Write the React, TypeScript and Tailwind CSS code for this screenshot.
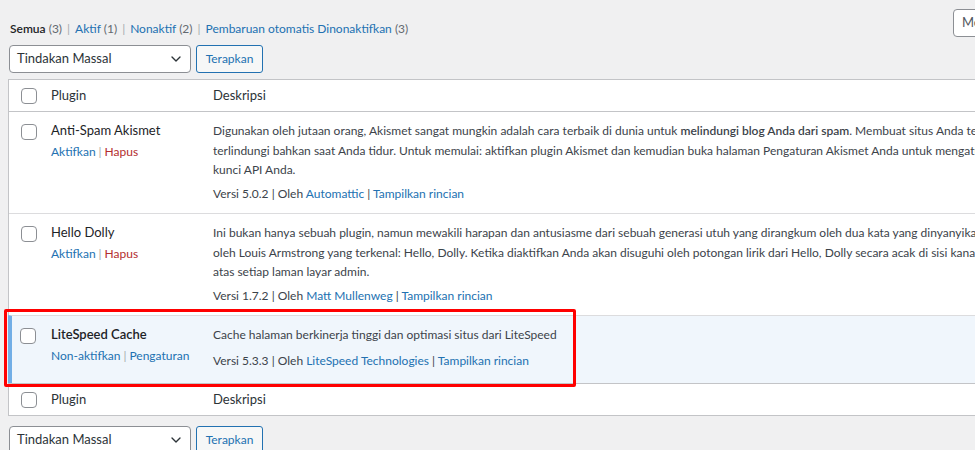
import React from "react";
import { ChevronDown } from "lucide-react";

const Sep = () => <span className="text-[#a7aaad] mx-[5px]">|</span>;

function Checkbox() {
  return <div className="w-4 h-4 border border-[#8c8f94] rounded-[4px] bg-white" />;
}

function BulkActions() {
  return (
    <div className="flex gap-[5px]">
      <div className="w-[182px] h-[28px] border border-[#8c8f94] rounded-[4px] bg-white pl-[7px] pr-[6px] flex items-center justify-between text-[13px] text-[#2c3338]">
        <span>Tindakan Massal</span>
        <ChevronDown size={16} strokeWidth={2} className="text-[#2c3338]" />
      </div>
      <div className="w-[67px] h-[28px] border border-[#2271b1] rounded-[3px] bg-[#f6f7f7] text-[#2271b1] flex items-center justify-center text-[12px]">
        Terapkan
      </div>
    </div>
  );
}

function HeaderRow({ bottom }: { bottom?: boolean }) {
  return (
    <div
      className={
        "flex items-center h-[32px] text-[13px] text-[#2c3338] " +
        (bottom ? "border-t border-[#c3c4c7]" : "border-b border-[#c3c4c7]")
      }
    >
      <div className="w-[42px] pl-[12px] flex">
        <Checkbox />
      </div>
      <div className="w-[162px]">Plugin</div>
      <div className="flex-1">Deskripsi</div>
    </div>
  );
}

export default function App() {
  return (
    <div className="relative h-[450px] w-[975px] overflow-hidden bg-[#f0f0f1] text-[12px] text-[#3c434a] font-['Segoe_UI',Lato,'Noto_Sans',sans-serif]">
      <div className="w-[1160px] pl-[8px]">
        <div className="flex">
          <div className="flex-1">
            <div className="pt-[20px] pl-[2px] leading-[18px] text-[#646970]">
              <span className="font-semibold text-[#1d2327]">Semua</span> (3)
              <Sep />
              <span className="text-[#2271b1]">Aktif</span> (1)
              <Sep />
              <span className="text-[#2271b1]">Nonaktif</span> (2)
              <Sep />
              <span className="text-[#2271b1]">Pembaruan otomatis Dinonaktifkan</span> (3)
            </div>
            <div className="mt-[7px] pl-[1px]">
              <BulkActions />
            </div>
          </div>
          <div className="mt-[9px] w-[207px] h-[28px] border border-[#8c8f94] rounded-[4px] bg-white pl-[8px] flex items-center text-[13px] text-[#50575e] whitespace-nowrap overflow-hidden">
            Mencari plugin yang terpasang...
          </div>
        </div>

        <div className="mt-[6px] border border-[#c3c4c7] bg-white">
          <HeaderRow />

          {/* Akismet */}
          <div className="flex">
            <div className="w-[42px] pl-[12px] pt-[12px]">
              <Checkbox />
            </div>
            <div className="w-[162px] pt-[9px]">
              <div className="text-[13px] leading-[19px] text-[#1d2327]">Anti-Spam Akismet</div>
              <div className="pt-[3px] leading-[18px]">
                <span className="text-[#2271b1]">Aktifkan</span>
                <span className="text-[#a7aaad] mx-[3px]">|</span>
                <span className="text-[#b32d2e]">Hapus</span>
              </div>
            </div>
            <div className="flex-1 pt-[9px] pb-[10px] leading-[19.5px] whitespace-nowrap">
              <div>
                Digunakan oleh jutaan orang, Akismet sangat mungkin adalah cara terbaik di dunia untuk{" "}
                <span className="font-semibold">melindungi blog Anda dari spam</span>. Membuat situs Anda tetap
              </div>
              <div>
                terlindungi bahkan saat Anda tidur. Untuk memulai: aktifkan plugin Akismet dan kemudian buka halaman Pengaturan Akismet Anda untuk mengatur
              </div>
              <div>kunci API Anda.</div>
              <div className="mt-[4px]">
                Versi 5.0.2 <span>|</span> Oleh <span className="text-[#2271b1]">Automattic</span> <span>|</span>{" "}
                <span className="text-[#2271b1]">Tampilkan rincian</span>
              </div>
            </div>
          </div>

          {/* Hello Dolly */}
          <div className="flex border-t border-[#dcdcde]">
            <div className="w-[42px] pl-[12px] pt-[12px]">
              <Checkbox />
            </div>
            <div className="w-[162px] pt-[9px]">
              <div className="text-[13px] leading-[19px] text-[#1d2327]">Hello Dolly</div>
              <div className="pt-[3px] leading-[18px]">
                <span className="text-[#2271b1]">Aktifkan</span>
                <span className="text-[#a7aaad] mx-[3px]">|</span>
                <span className="text-[#b32d2e]">Hapus</span>
              </div>
            </div>
            <div className="flex-1 pt-[9px] pb-[10px] leading-[19.5px] whitespace-nowrap">
              <div>
                Ini bukan hanya sebuah plugin, namun mewakili harapan dan antusiasme dari sebuah generasi utuh yang dirangkum oleh dua kata yang dinyanyikan
              </div>
              <div>
                oleh Louis Armstrong yang terkenal: Hello, Dolly. Ketika diaktifkan Anda akan disuguhi oleh potongan lirik dari Hello, Dolly secara acak di sisi kanan
              </div>
              <div>atas setiap laman layar admin.</div>
              <div className="mt-[4px]">
                Versi 1.7.2 <span>|</span> Oleh <span className="text-[#2271b1]">Matt Mullenweg</span> <span>|</span>{" "}
                <span className="text-[#2271b1]">Tampilkan rincian</span>
              </div>
            </div>
          </div>

          {/* LiteSpeed */}
          <div className="flex border-t border-[#dcdcde] bg-[#f0f6fc] border-l-4 border-l-[#72aee6] -ml-px">
            <div className="w-[39px] pl-[8px] pt-[12px]">
              <Checkbox />
            </div>
            <div className="w-[162px] pt-[9px]">
              <div className="text-[13px] leading-[19px] font-semibold text-[#1d2327]">LiteSpeed Cache</div>
              <div className="pt-[3px] leading-[18px]">
                <span className="text-[#2271b1]">Non-aktifkan</span>
                <span className="text-[#a7aaad] mx-[3px]">|</span>
                <span className="text-[#2271b1]">Pengaturan</span>
              </div>
            </div>
            <div className="flex-1 pt-[9px] pb-[13px] leading-[19.5px] whitespace-nowrap">
              <div>Cache halaman berkinerja tinggi dan optimasi situs dari LiteSpeed</div>
              <div className="mt-[6px]">
                Versi 5.3.3 <span>|</span> Oleh <span className="text-[#2271b1]">LiteSpeed Technologies</span> <span>|</span>{" "}
                <span className="text-[#2271b1]">Tampilkan rincian</span>
              </div>
            </div>
          </div>

          <HeaderRow bottom />
        </div>

        <div className="mt-[10px] pl-[1px]">
          <BulkActions />
        </div>
      </div>

      <div className="absolute left-[4px] top-[309px] w-[572px] h-[78px] border-[3px] border-[#ff0000] rounded-[2px] pointer-events-none" />
    </div>
  );
}
